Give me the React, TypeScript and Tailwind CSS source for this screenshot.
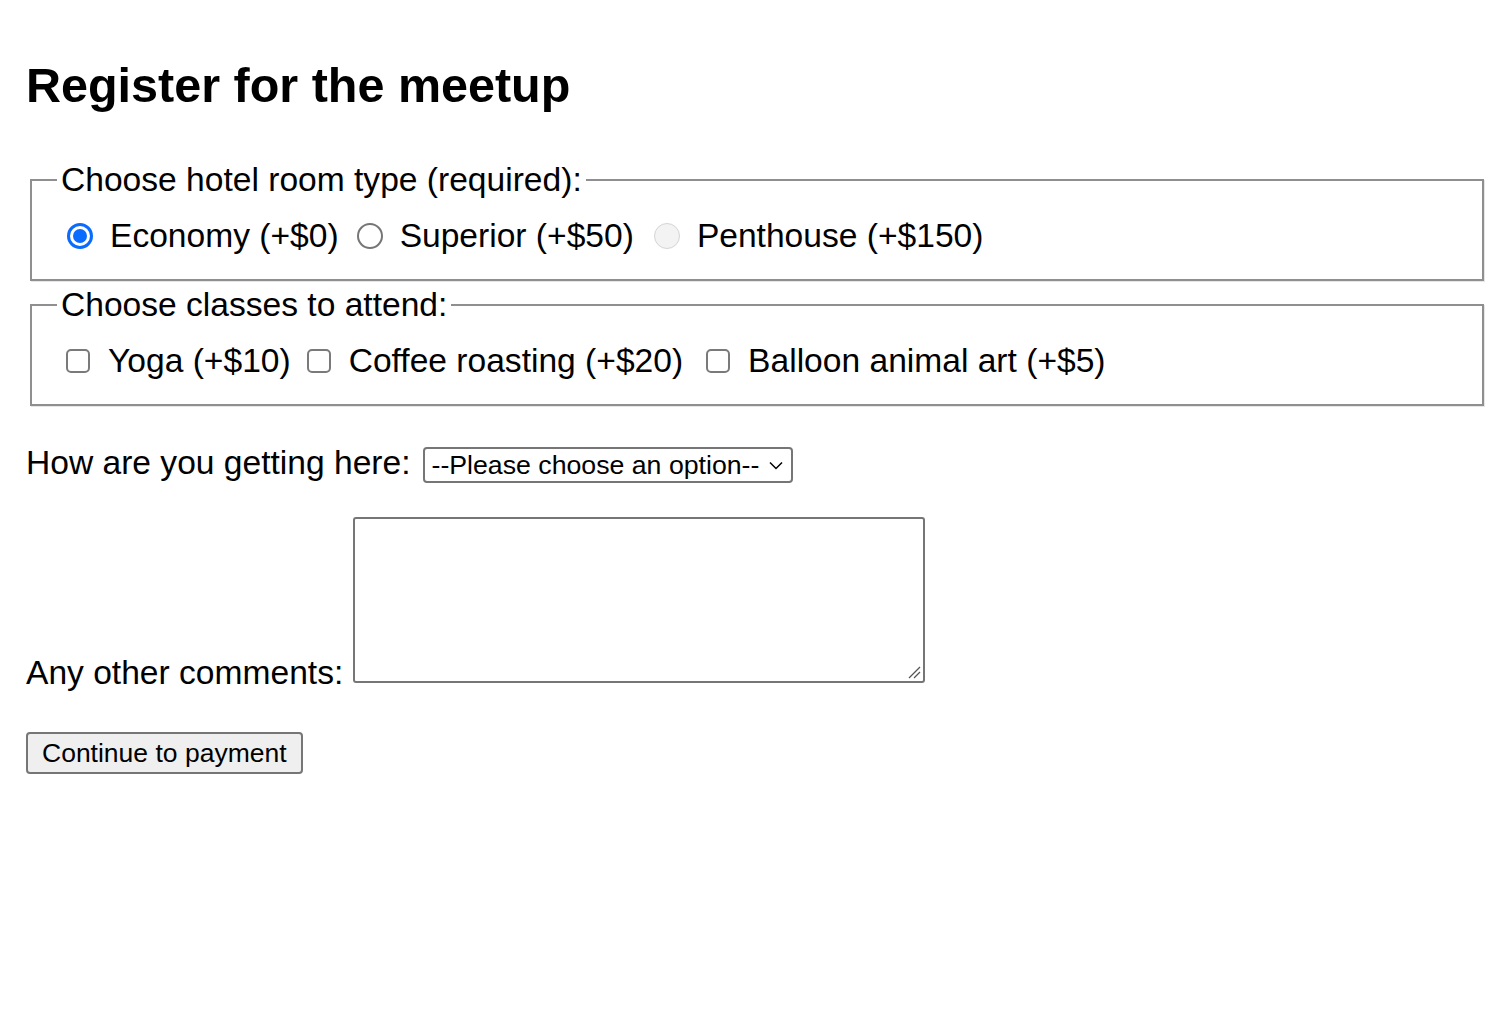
import React from 'react';

const rooms = [
  { label: 'Economy (+$0)', state: 'checked', gap: 'ml-[10px]' },
  { label: 'Superior (+$50)', state: 'off', gap: 'ml-[18px]' },
  { label: 'Penthouse (+$150)', state: 'disabled', gap: 'ml-[20px]' },
];

const classes = [
  { label: 'Yoga (+$10)', gap: 'ml-[9px]' },
  { label: 'Coffee roasting (+$20)', gap: 'ml-[16px]' },
  { label: 'Balloon animal art (+$5)', gap: 'ml-[23px]' },
];

function Radio({ state }: { state: string }) {
  if (state === 'checked') {
    return (
      <span className="flex h-[26px] w-[26px] shrink-0 items-center justify-center rounded-full border-[3px] border-[#0a6cfe] bg-white">
        <span className="h-[14px] w-[14px] rounded-full bg-[#0a6cfe]" />
      </span>
    );
  }
  if (state === 'disabled') {
    return <span className="h-[26px] w-[26px] shrink-0 rounded-full border-[1.5px] border-[#d4d4d4] bg-[#f3f3f3]" />;
  }
  return <span className="h-[26px] w-[26px] shrink-0 rounded-full border-2 border-[#767676] bg-white" />;
}

function Checkbox() {
  return <span className="h-[24px] w-[24px] shrink-0 rounded-[5px] border-2 border-[#7a7a7a] bg-white" />;
}

export default function App() {
  return (
    <div className="min-h-screen bg-white pl-[26px] pr-[24px] text-black font-['Liberation_Sans',Arial,sans-serif]">
      <h1 className="pt-[61px] text-[48.5px] font-bold leading-[48px]">Register for the meetup</h1>

      <form className="flex flex-col">
        <fieldset className="mx-[4px] mt-[52px] border-2 border-[#8f8f8f] pl-[25px] pr-[24px] pt-[18px] pb-[24px] shadow-[1px_1px_0_#e6e6e6]">
          <legend className="px-[4px] text-[33.6px] leading-[38px]">Choose hotel room type (required):</legend>
          <div className="flex items-center text-[33.6px] leading-[38px]">
            {rooms.map((room) => (
              <div key={room.label} className={`flex items-center ${room.gap}`}>
                <Radio state={room.state} />
                <span className="ml-[17px]">{room.label}</span>
              </div>
            ))}
          </div>
        </fieldset>

        <fieldset className="mx-[4px] mt-[5px] border-2 border-[#8f8f8f] pl-[25px] pr-[24px] pt-[18px] pb-[24px] shadow-[1px_1px_0_#e6e6e6]">
          <legend className="px-[4px] text-[33.6px] leading-[38px]">Choose classes to attend:</legend>
          <div className="flex items-center text-[33.6px] leading-[38px]">
            {classes.map((c) => (
              <div key={c.label} className={`flex items-center ${c.gap}`}>
                <Checkbox />
                <span className="ml-[18px]">{c.label}</span>
              </div>
            ))}
          </div>
        </fieldset>

        <div className="mt-[38px] flex items-baseline">
          <span className="text-[33.6px] leading-[38px]">How are you getting here:</span>
          <div className="ml-[12px] flex h-[36px] w-[370px] items-center rounded-[4px] border-2 border-[#767676] bg-white pl-[7px] pr-[8px] text-[26.7px] leading-[32px]">
            <span>--Please choose an option--</span>
            <svg className="ml-auto" width="14" height="9" viewBox="0 0 14 9" fill="none">
              <polyline points="1,1.5 7,7.5 13,1.5" stroke="#000" strokeWidth="1.5" />
            </svg>
          </div>
        </div>

        <div className="mt-[34px] flex items-end">
          <span className="text-[33.6px] leading-[38px]">Any other comments:</span>
          <div className="relative mb-[9px] ml-[10px] h-[166px] w-[572px] rounded-[3px] border-2 border-[#767676] bg-white">
            <svg className="absolute bottom-[2px] right-[2px]" width="14" height="14" viewBox="0 0 14 14" fill="none">
              <line x1="13" y1="2" x2="2" y2="13" stroke="#555" strokeWidth="1.2" />
              <line x1="13" y1="7" x2="7" y2="13" stroke="#555" strokeWidth="1.2" />
            </svg>
          </div>
        </div>

        <div className="mt-[40px]">
          <button
            type="button"
            className="h-[42px] w-[277px] rounded-[4px] border-2 border-[#767676] bg-[#efefef] text-left pl-[14px] text-[26.5px] leading-[36px]"
          >
            Continue to payment
          </button>
        </div>
      </form>
    </div>
  );
}
